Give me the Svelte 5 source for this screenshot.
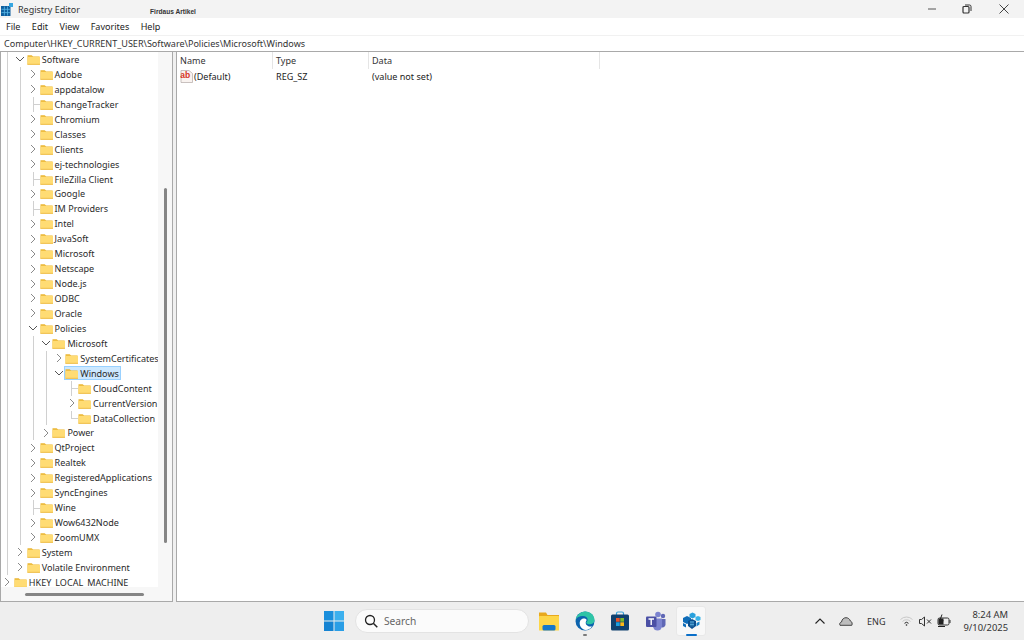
<script>
    const menus = ['File', 'Edit', 'View', 'Favorites', 'Help'];

    // level, name, state: c = closed, o = open, l = leaf
    const raw = [
        [1, 'Software', 'o'], [2, 'Adobe', 'c'], [2, 'appdatalow', 'c'], [2, 'ChangeTracker', 'l'],
        [2, 'Chromium', 'c'], [2, 'Classes', 'c'], [2, 'Clients', 'c'], [2, 'ej-technologies', 'c'],
        [2, 'FileZilla Client', 'l'], [2, 'Google', 'c'], [2, 'IM Providers', 'l'], [2, 'Intel', 'c'],
        [2, 'JavaSoft', 'c'], [2, 'Microsoft', 'c'], [2, 'Netscape', 'c'], [2, 'Node.js', 'c'],
        [2, 'ODBC', 'c'], [2, 'Oracle', 'c'], [2, 'Policies', 'o'], [3, 'Microsoft', 'o'],
        [4, 'SystemCertificates', 'c'], [4, 'Windows', 'o'], [5, 'CloudContent', 'l'],
        [5, 'CurrentVersion', 'c'], [5, 'DataCollection', 'l'], [3, 'Power', 'c'], [2, 'QtProject', 'c'],
        [2, 'Realtek', 'c'], [2, 'RegisteredApplications', 'c'], [2, 'SyncEngines', 'c'], [2, 'Wine', 'l'],
        [2, 'Wow6432Node', 'c'], [2, 'ZoomUMX', 'c'], [1, 'System', 'c'], [1, 'Volatile Environment', 'c'],
        [0, 'HKEY_LOCAL_MACHINE', 'c']
    ];

    function hasNextSibling(i, col) {
        for (let j = i + 1; j < raw.length; j++) {
            if (raw[j][0] === col) return true;
            if (raw[j][0] < col) return false;
        }
        return false;
    }

    const rows = raw.map(([level, name, state], i) => {
        const cols = [];
        for (let c = 0; c < level; c++) cols.push(hasNextSibling(i, c) ? 'pass' : '');
        return { level, name, state, cols, last: !hasNextSibling(i, level), selected: name === 'Windows' };
    });
</script>

{#snippet folder()}
    <svg class="folder" viewBox="0 0 13 11" width="13" height="11">
        <path d="M0.5 1.2h4.2l1.4 1.3h6.4v8h-12z" fill="#eab634" />
        <rect x="0.5" y="2.8" width="12.5" height="7.9" fill="#ffdc74" />
        <rect x="0.5" y="9.8" width="12.5" height="0.9" fill="#edbd4a" />
    </svg>
{/snippet}

<div class="page">
    <header class="title">
        <svg class="logo" viewBox="0 0 12 13" width="12" height="13">
            <rect x="0" y="3" width="9.5" height="10" fill="#0f5f9e" />
            <path d="M0.5 6.3h8.5M0.5 9.6h8.5M3.4 3.5v9M6.5 3.5v9" stroke="#58b6e6" stroke-width="0.8" />
            <rect x="8" y="0" width="4" height="4" fill="#37a6e0" />
        </svg>
        <span class="app">Registry Editor</span>
        <span class="mark">Firdaus Artikel</span>
        <div class="controls">
            <svg viewBox="0 0 10 10" width="10" height="10"><path d="M1 5h8" stroke="#555" /></svg>
            <svg class="restore" viewBox="0 0 10 10" width="10" height="10"><rect x="1" y="2.5" width="6" height="6.5" rx="1" fill="none" stroke="#333" stroke-width="1.2" /><path d="M3 1h4.5a1.5 1.5 0 0 1 1.5 1.5V7" fill="none" stroke="#333" /></svg>
            <svg viewBox="0 0 10 10" width="10" height="10"><path d="M0.5 0.5l9 9M9.5 0.5l-9 9" stroke="#444" /></svg>
        </div>
    </header>

    <nav class="menu">
        {#each menus as m}
            <span>{m}</span>
        {/each}
    </nav>

    <div class="address">Computer\HKEY_CURRENT_USER\Software\Policies\Microsoft\Windows</div>

    <main class="body">
        <section class="treepane">
            <div class="treeview">
                <div class="tree">
                    {#each rows as r}
                        <div class="row">
                            {#each r.cols as g}
                                <span class="col" class:pass={g === 'pass'}></span>
                            {/each}
                            <span class="col own" class:leaf={r.state === 'l'} class:end={r.last}>
                                {#if r.state === 'c'}
                                    <svg viewBox="0 0 8 10" width="8" height="10"><path d="M2 1l4 4-4 4" fill="none" stroke="#8a8a8a" /></svg>
                                {:else if r.state === 'o'}
                                    <svg viewBox="0 0 10 8" width="10" height="8"><path d="M1 2l4 4 4-4" fill="none" stroke="#555" /></svg>
                                {/if}
                            </span>
                            <span class="item" class:selected={r.selected}>
                                {@render folder()}
                                <span class="label">{r.name}</span>
                            </span>
                        </div>
                    {/each}
                </div>
                <div class="vtrack"><div class="vthumb"></div></div>
            </div>
            <div class="htrack"><div class="hthumb"></div></div>
        </section>

        <div class="splitter"></div>

        <section class="list">
            <div class="thead">
                <span class="th name">Name</span>
                <span class="th type">Type</span>
                <span class="th data">Data</span>
            </div>
            <div class="tr">
                <span class="cell name">
                    <svg class="ab" viewBox="0 0 13 13" width="13" height="13">
                        <path d="M1 0.5h8l3.5 3v9h-11.500z" fill="#f9f3f0" stroke="#b3a9a6" stroke-width="0.7" />
                        <text x="0.2" y="8.200" class="abtext">ab</text>
                    </svg>
                    (Default)
                </span>
                <span class="cell type">REG_SZ</span>
                <span class="cell data">(value not set)</span>
            </div>
        </section>
    </main>

    <footer class="taskbar">
        <svg class="start" viewBox="0 0 20 20" width="20" height="20">
            <rect x="0" y="0" width="9.500" height="9.500" fill="#1a8fdc" />
            <rect x="10.500" y="0" width="9.500" height="9.500" fill="#3cb0ee" />
            <rect x="0" y="10.500" width="9.500" height="9.500" fill="#1583d2" />
            <rect x="10.500" y="10.500" width="9.500" height="9.500" fill="#2a9ee6" />
        </svg>
        <div class="search">
            <svg viewBox="0 0 14 14" width="14" height="14"><circle cx="6" cy="6" r="4.500" fill="none" stroke="#222" stroke-width="1.300" /><path d="M9.300 9.300l4 4" stroke="#222" stroke-width="1.500" /></svg>
            <span>Search</span>
        </div>
        <div class="apps">
            <div class="app-btn">
                <svg viewBox="0 0 20 20" width="20" height="20">
                    <path d="M0 1.500h7l1.500 2.500H20v15H0z" fill="#e8a91e" />
                    <rect x="0" y="5" width="20" height="14.500" rx="0.500" fill="#fdd648" />
                    <rect x="7" y="14" width="13" height="5.500" rx="1.500" fill="#1477c9" transform="translate(-3.500 0)" />
                </svg>
            </div>
            <div class="app-btn">
                <svg viewBox="0 0 20 20" width="20" height="20">
                    <circle cx="10" cy="10" r="9.500" fill="#0c63ad" />
                    <path d="M0.500 9C1.500 3.500 6 0.500 10.500 0.500c5 0 9 4 9 8.500 0 3-2.500 4.300-5 4.300-2 0-3.300-.8-3.300-1.800 0-.5 1.500-1 1.500-2.700C12.700 6.500 10.500 5 8 5 4.500 5 1.500 6.500 0.500 9z" fill="#2fc4a6" />
                    <path d="M9 7.500c-3 0-4.300 2.500-4.300 5 0 3 2.500 6 6 6.500 2.500 0 4.800-1.300 6.300-3.500-3 .5-6.300-1-6.300-3.800 0-1.400 .9-1.700 .9-2.600 0-.9-1.200-1.600-2.600-1.600z" fill="#fff" />
                </svg>
                <i class="dot"></i>
            </div>
            <div class="app-btn">
                <svg viewBox="0 0 20 20" width="20" height="20">
                    <path d="M6.500 4V2.500a1.500 1.500 0 0 1 1.500-1.500h4a1.500 1.500 0 0 1 1.500 1.500V4" fill="none" stroke="#35a0d8" stroke-width="1.200" />
                    <rect x="1" y="3.500" width="18" height="16" rx="1.500" fill="#10416f" />
                    <rect x="6" y="7" width="3.700" height="3.700" fill="#e8532a" />
                    <rect x="10.300" y="7" width="3.700" height="3.700" fill="#7cb82a" />
                    <rect x="6" y="11.300" width="3.700" height="3.700" fill="#1ba1e2" />
                    <rect x="10.300" y="11.300" width="3.700" height="3.700" fill="#fbb817" />
                </svg>
            </div>
            <div class="app-btn">
                <svg viewBox="0 0 20 20" width="20" height="20">
                    <circle cx="12" cy="3.500" r="2.800" fill="#7b83cf" />
                    <circle cx="17" cy="5" r="2.200" fill="#5f67b5" />
                    <path d="M14 8h5.500v6a3 3 0 0 1-5.500 1z" fill="#5f67b5" />
                    <path d="M7 7.500h9v7.500a4.500 4.500 0 0 1-9 0z" fill="#7b83cf" />
                    <rect x="0" y="5.500" width="10.500" height="10.500" rx="1" fill="#4b50a5" />
                    <path d="M2.500 8h5.500M5.200 8v6" stroke="#fff" stroke-width="1.400" />
                </svg>
            </div>
            <div class="app-btn active">
                <svg viewBox="0 0 20 20" width="20" height="20">
                    <path d="M2 7l4-2 4 2v4l-4 2-4-2z" fill="#0f6cb8" />
                    <path d="M7 10l4-2 4 2v5l-4 3-4-3z" fill="#0b4f8e" />
                    <path d="M2 12l3 1.500v3l-3-1.500z" fill="#0f6cb8" />
                    <path d="M8.500 3l3-1.500 3 1.500v3l-3 1.500-3-1.500z" fill="#28a0dc" />
                    <path d="M14.500 6l2.500-1 2.500 1v3l-2.500 1-2.500-1z" fill="#39b3e8" />
                    <path d="M15.500 12l3-1.500v3l-3 2z" fill="#1a86cc" />
                    <path d="M9 11h4M9 13.500h4M10 10v5.500M12 10v5.500" stroke="#6cc4ee" stroke-width="0.600" />
                </svg>
                <i class="bar"></i>
            </div>
        </div>
        <div class="tray">
            <svg class="t-chev" viewBox="0 0 10 6" width="10" height="6"><path d="M0.500 5.500L5 1l4.500 4.500" fill="none" stroke="#222" stroke-width="1.100" /></svg>
            <svg class="t-cloud" viewBox="0 0 14 9" width="14" height="9"><path d="M1 8.300c-.8-1.500 0-3 1.500-3.300C3 2 5 .7 7 .7s3.700 1.300 4.400 3.300c1.500.5 2.300 2.800 1.400 4.300z" fill="#bdbdbd" stroke="#333" stroke-width="0.900" /></svg>
            <span class="eng">ENG</span>
            <svg class="t-wifi" viewBox="0 0 13 10" width="13" height="10">
                <path d="M0.500 3.500a8.500 8.500 0 0 1 12 0M2.500 5.500a5.500 5.500 0 0 1 8 0" fill="none" stroke="#c8c8c8" />
                <path d="M4.500 7.300a2.800 2.800 0 0 1 4 0" fill="none" stroke="#222" />
                <circle cx="6.500" cy="9" r="0.800" fill="#222" />
            </svg>
            <svg class="t-snd" viewBox="0 0 13 11" width="13" height="11">
                <path d="M0.500 3.500h2l3-2.500v9l-3-2.500h-2z" fill="none" stroke="#333" />
                <path d="M8 3.500l4 4M12 3.500l-4 4" stroke="#333" />
            </svg>
            <svg class="t-bat" viewBox="0 0 14 14" width="14" height="14">
                <rect x="1" y="4" width="11" height="7" rx="1.500" fill="none" stroke="#333" />
                <path d="M13 6v3" stroke="#333" />
                <rect x="1.500" y="4.500" width="5" height="6" fill="#222" />
                <path d="M5 0.500L3 6h3l-1 4" fill="none" stroke="#222" />
                <path d="M1 12.500h7" stroke="#222" />
            </svg>
            <div class="clock">
                <span>8:24 AM</span>
                <span>9/10/2025</span>
            </div>
        </div>
    </footer>
</div>

<style>
    :global(body) {
        margin: 0;
        background: #fff;
    }

    .page {
        width: 1024px;
        height: 640px;
        display: flex;
        flex-direction: column;
        overflow: hidden;
        font-family: "Noto Sans", "Open Sans", sans-serif;
        font-size: 9.05px;
        color: #222;
    }

    .title {
        height: 18px;
        flex: none;
        background: #f3f3f3;
        display: flex;
        align-items: center;
    }

    .logo {
        margin-left: 1px;
        margin-right: 5px;
        flex: none;
    }

    .app {
        font-size: 9px;
        color: #333;
    }

    .mark {
        margin-left: 70px;
        margin-top: 5px;
        font-family: "Liberation Sans", sans-serif;
        font-weight: 700;
        font-size: 6.6px;
        color: #333;
    }

    .controls {
        margin-left: auto;
        display: flex;
        align-items: center;
        gap: 26px;
        padding-right: 15px;
    }

    .restore {
        margin-left: -1px;
        margin-right: 1px;
    }

    .menu {
        height: 16px;
        flex: none;
        display: flex;
        align-items: center;
        gap: 11.4px;
        padding-left: 6px;
        background: #fff;
    }

    .address {
        margin-top: 1px;
        flex: none;
        line-height: 15px;
        padding-left: 4px;
        background: #fff;
        border-top: 1px solid #f1f1f1;
        border-bottom: 1px solid #a9a9a9;
        box-sizing: border-box;
        height: 17px;
        color: #333;
    }

    .body {
        flex: 1;
        min-height: 0;
        display: flex;
        background: #f0f0f0;
    }

    .treepane {
        flex: none;
        display: flex;
        flex-direction: column;
        border-left: 1px solid #a9a9a9;
        border-right: 1px solid #a9a9a9;
        border-bottom: 1px solid #a9a9a9;
        background: #f8f8f8;
        box-sizing: border-box;
        width: 173px;
    }

    .treeview {
        flex: 1;
        min-height: 0;
        display: flex;
    }

    .tree {
        width: 157px;
        flex: none;
        overflow: hidden;
        background: #fff;
        white-space: nowrap;
    }

    .row {
        height: 14.94px;
        display: flex;
        align-items: stretch;
    }

    .col {
        width: 12.85px;
        flex: none;
        position: relative;
        display: flex;
        align-items: center;
        justify-content: center;
    }

    .pass::before,
    .leaf::before {
        content: "";
        position: absolute;
        left: 6px;
        top: 0;
        bottom: 0;
        border-left: 1px solid #d0d0d0;
    }

    .leaf.end::before {
        bottom: 50%;
    }

    .leaf::after {
        content: "";
        position: absolute;
        left: 6px;
        right: 0;
        top: 50%;
        border-top: 1px solid #d0d0d0;
    }

    .item {
        display: flex;
        align-items: center;
        gap: 2px;
        height: 14px;
        margin-top: 0.5px;
        padding-right: 1px;
        box-sizing: border-box;
        border: 1px solid transparent;
        margin-left: -1px;
    }

    .selected {
        background: #cce8ff;
        border-color: #99d1ff;
    }

    .folder {
        flex: none;
    }

    .label {
        color: #2a2a2a;
    }

    .vtrack {
        flex: 1;
        background: #f7f7f7;
        display: flex;
        justify-content: center;
        padding-top: 136px;
        padding-bottom: 44px;
    }

    .vthumb {
        width: 3px;
        background: #858585;
        border-radius: 2px;
    }

    .htrack {
        height: 14px;
        flex: none;
        background: #f7f7f7;
        display: flex;
        align-items: center;
        padding-left: 24px;
    }

    .hthumb {
        width: 119px;
        height: 3px;
        background: #858585;
        border-radius: 2px;
    }

    .splitter {
        width: 3px;
        flex: none;
        background: #f0f0f0;
    }

    .list {
        flex: 1;
        background: #fff;
        border-left: 1px solid #a9a9a9;
        border-bottom: 1px solid #a9a9a9;
    }

    .thead {
        height: 17px;
        display: flex;
        align-items: center;
    }

    .tr {
        height: 15px;
        display: flex;
        align-items: center;
    }

    .name,
    .type {
        width: 96px;
    }

    .data {
        width: 231px;
    }

    .th,
    .cell {
        padding-left: 3px;
        box-sizing: border-box;
        flex: none;
    }

    .th {
        border-right: 1px solid #e5e5e5;
        height: 17px;
        line-height: 18px;
        color: #333;
    }

    .cell.name {
        display: flex;
        align-items: center;
        gap: 1px;
    }

    .ab {
        flex: none;
    }

    .abtext {
        font-family: "Liberation Sans", sans-serif;
        font-size: 8.5px;
        font-weight: 700;
        fill: #d6331f;
    }

    .taskbar {
        height: 38px;
        flex: none;
        display: flex;
        align-items: center;
        background: #eeeeee;
        padding-left: 324px;
        box-sizing: border-box;
    }

    .start {
        flex: none;
    }

    .search {
        width: 174px;
        height: 24px;
        margin-left: 11px;
        flex: none;
        box-sizing: border-box;
        display: flex;
        align-items: center;
        gap: 6px;
        padding-left: 8px;
        border-radius: 12px;
        background: #fbfbfb;
        border: 1px solid #e3e3e3;
        font-size: 10.2px;
        color: #666;
    }

    .apps {
        display: flex;
        align-items: center;
        gap: 5.500px;
        margin-left: 5px;
    }

    .app-btn {
        width: 30px;
        height: 30px;
        display: flex;
        align-items: center;
        justify-content: center;
        position: relative;
        border-radius: 3px;
    }

    .active {
        background: #f8f8f8;
        border: 1px solid #e8e8e8;
        box-sizing: border-box;
    }

    .dot {
        position: absolute;
        left: 13px;
        bottom: 0;
        width: 4px;
        height: 2px;
        border-radius: 1px;
        background: #7a7a7a;
    }

    .bar {
        position: absolute;
        left: 9px;
        bottom: -1px;
        width: 11px;
        height: 2px;
        border-radius: 1px;
        background: #0a6fc9;
    }

    .tray {
        margin-left: auto;
        display: flex;
        align-items: center;
        padding-right: 16px;
    }

    .t-chev {
        margin-right: 14px;
    }

    .eng {
        margin-left: 14px;
        margin-right: 15px;
        color: #333;
    }

    .t-snd {
        margin-left: 6px;
    }

    .t-bat {
        margin-left: 5px;
    }

    .clock {
        margin-left: 12px;
        display: flex;
        flex-direction: column;
        align-items: flex-end;
        line-height: 13px;
        font-size: 9.4px;
        color: #333;
    }
</style>
